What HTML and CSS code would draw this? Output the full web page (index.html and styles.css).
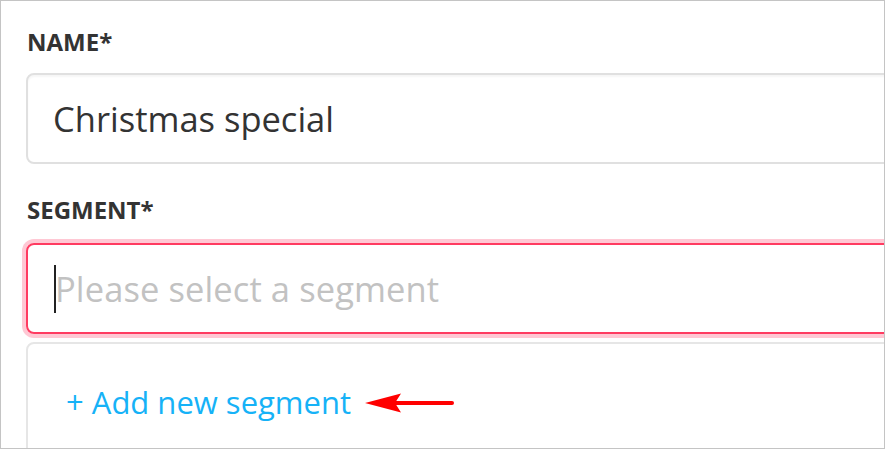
FILE: index.html
```html
<!DOCTYPE html>
<html>
<head>
<meta charset="utf-8">
<link rel="stylesheet" href="styles.css">
</head>
<body>
<div class="frame">
  <div class="form">
    <div class="label label-name">NAME*</div>
    <div class="field field-name">Christmas special</div>
    <div class="label label-segment">SEGMENT*</div>
    <div class="field field-error"><span class="caret"></span><span class="placeholder">Please select a segment</span></div>
    <div class="dropdown">
      <div class="add-row">
        <span class="add-link">+ Add new segment</span>
        <svg class="arrow" width="92" height="24" viewBox="0 0 92 24">
          <line x1="30" y1="12" x2="88" y2="12" stroke="#f00" stroke-width="4" stroke-linecap="round"/>
          <path d="M1 12 L37 2.5 L31 12 L37 21.5 Z" fill="#f00"/>
        </svg>
      </div>
    </div>
  </div>
</div>
</body>
</html>
```
FILE: styles.css
```css
html, body {
  margin: 0;
  padding: 0;
  background: #fff;
}
.frame {
  width: 885px;
  height: 449px;
  box-sizing: border-box;
  border: 1px solid #c4c4c4;
  overflow: hidden;
  font-family: "Open Sans", "Noto Sans", sans-serif;
}
.form {
  padding: 25px 0 0 25px;
  margin-right: -30px;
}
.label {
  font-weight: 700;
  font-size: 24px;
  line-height: 32px;
  color: #333;
}
.label-name {
  margin-left: 1px;
}
.label-segment {
  margin-top: 30px;
  margin-left: 1px;
}
.field {
  box-sizing: border-box;
  height: 91px;
  border-radius: 8px;
  display: flex;
  align-items: center;
  padding-left: 26px;
  font-size: 34.5px;
}
.field-name {
  margin-top: 15px;
  border: 2px solid #e0e0e0;
  box-shadow: inset 0 2px 2px rgba(0,0,0,0.04);
  color: #333;
  padding-left: 25px;
}
.field-error {
  margin-top: 17px;
  border: 2px solid #ff3b61;
  box-shadow: 0 0 0 4px #ffc8d4;
}
.caret {
  display: inline-block;
  width: 2px;
  height: 48px;
  background: #222;
  margin-right: -1px;
}
.placeholder {
  color: #c2c2c2;
  letter-spacing: 0.1px;
}
.dropdown {
  margin-top: 8px;
  height: 140px;
  border: 2px solid #e6e6e6;
  border-radius: 8px;
}
.add-row {
  display: flex;
  align-items: center;
  padding: 37px 0 0 38px;
}
.add-link {
  color: #16b2f7;
  font-size: 31px;
  line-height: 42px;
}
.arrow {
  margin-left: 13px;
  margin-top: 1px;
}
```
